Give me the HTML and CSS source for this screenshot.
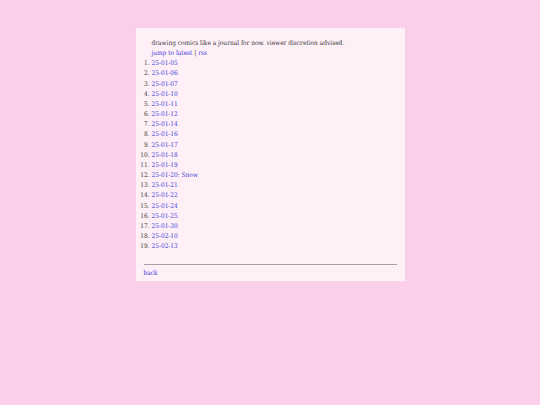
FILE: index.html
```html
<!DOCTYPE html>
<html lang="en">
<head>
    <meta charset="UTF-8">
    <title>comics</title>
    <link rel="stylesheet" href="styles.css">
</head>
<body>

<div class="page">
    <p class="intro">drawing comics like a journal for now. viewer discretion advised.</p>
    <p class="intro"><a href="#latest">jump to latest</a> | <a href="#rss">rss</a></p>

    <ol class="entries">
        <li><a href="#">25-01-05</a></li>
        <li><a href="#">25-01-06</a></li>
        <li><a href="#">25-01-07</a></li>
        <li><a href="#">25-01-10</a></li>
        <li><a href="#">25-01-11</a></li>
        <li><a href="#">25-01-12</a></li>
        <li><a href="#">25-01-14</a></li>
        <li><a href="#">25-01-16</a></li>
        <li><a href="#">25-01-17</a></li>
        <li><a href="#">25-01-18</a></li>
        <li><a href="#">25-01-19</a></li>
        <li><a href="#">25-01-20: Snow</a></li>
        <li><a href="#">25-01-21</a></li>
        <li><a href="#">25-01-22</a></li>
        <li><a href="#">25-01-24</a></li>
        <li><a href="#">25-01-25</a></li>
        <li><a href="#">25-01-30</a></li>
        <li><a href="#">25-02-10</a></li>
        <li id="latest"><a href="#">25-02-13</a></li>
    </ol>

    <hr>
    <a href="#">back</a>
</div>

</body>
</html>
```

FILE: styles.css
```css
body {
    background-color: #fbcfea;
    color: #333;
    font-family: Georgia, "DejaVu Serif Condensed", "Liberation Serif", serif;
    font-size: 6.5px;
    line-height: 10.15px;
    margin: 0;
}

a {
    color: #3b3bd6;
    text-decoration: none;
}

.page {
    width: 253px;
    margin: 27px auto 0;
    padding: 10px 8px 3px;
    background-color: #fff0f8;
    border: 1px dotted #f0b8d8;
}

.intro {
    margin: 0;
    padding-left: 8px;
}

.entries {
    margin: 0;
    padding-left: 8px;
}

hr {
    margin: 13px 0 3px;
    border: 0;
    border-top: 1px solid #a8a0a4;
}
```
